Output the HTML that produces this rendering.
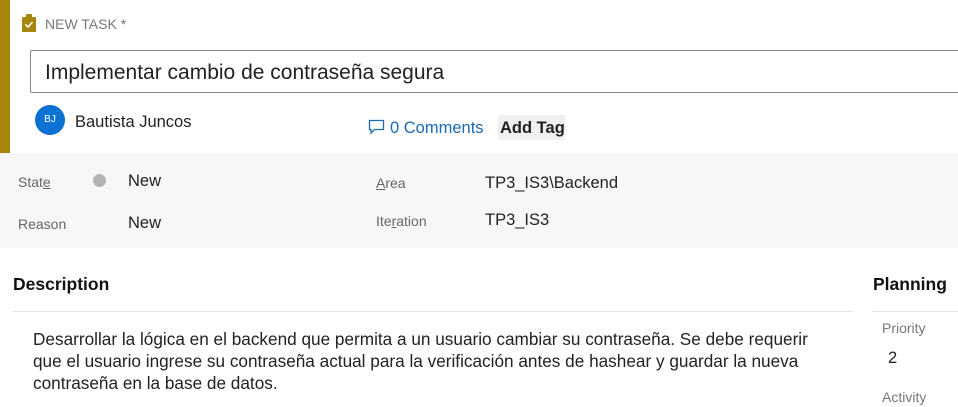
<!DOCTYPE html>
<html><head><style>
body{margin:0;width:958px;height:407px;overflow:hidden;background:#fff;font-family:"Liberation Sans",sans-serif;position:relative;color:#201f1e}
.a{position:absolute;white-space:nowrap}
.lbl{color:#666;font-size:14px}
.val{font-size:16.5px;color:#222}
</style></head><body>
<div class="a" style="left:0;top:0;width:10px;height:153px;background:#a7870b"></div>
<svg class="a" style="left:22px;top:14px" width="14" height="18" viewBox="0 0 14 18"><rect x="0" y="3" width="14" height="15" rx="1" fill="#a7870b"/><rect x="4" y="0" width="6" height="4" rx="1" fill="#a7870b"/><path d="M3.5 10.5l2.5 2.5 4.5-5" stroke="#fff" stroke-width="1.6" fill="none"/></svg>
<div class="a" style="left:45px;top:16px;font-size:14px;color:#777">NEW TASK *</div>
<div class="a" style="left:30px;top:50px;width:940px;height:43px;border:1px solid #888;border-radius:2px;box-sizing:border-box"></div>
<div class="a" style="left:45px;top:61px;font-size:21px;color:#222">Implementar cambio de contraseña segura</div>
<div class="a" style="left:35px;top:105px;width:30px;height:30px;border-radius:50%;background:#0b72d4;color:#fff;font-size:10px;text-align:center;line-height:30px">BJ</div>
<div class="a" style="left:75px;top:113px;font-size:16.5px;color:#222">Bautista Juncos</div>
<svg class="a" style="left:368px;top:119px" width="17" height="16" viewBox="0 0 17 16"><path d="M1.5 1.5h14v9h-9l-3.5 3.5v-3.5h-1.5z" stroke="#1a6ab5" stroke-width="1.3" fill="none"/></svg>
<div class="a" style="left:390px;top:119px;font-size:16.5px;color:#1a6ab5">0 Comments</div>
<div class="a" style="left:498px;top:115px;width:67px;height:25px;background:#f0f0f0;border-radius:2px"></div>
<div class="a" style="left:500px;top:119px;font-size:16.5px;font-weight:bold;color:#222">Add Tag</div>
<div class="a" style="left:0;top:153px;width:958px;height:95px;background:#f7f7f7"></div>
<div class="a lbl" style="left:18px;top:174px">Stat<u>e</u></div>
<div class="a" style="left:93px;top:174px;width:13px;height:13px;border-radius:50%;background:#b3b3b3"></div>
<div class="a val" style="left:128px;top:172px">New</div>
<div class="a lbl" style="left:18px;top:216px">Reason</div>
<div class="a val" style="left:128px;top:214px">New</div>
<div class="a lbl" style="left:376px;top:175px"><u>A</u>rea</div>
<div class="a val" style="left:485px;top:174px">TP3_IS3\Backend</div>
<div class="a lbl" style="left:376px;top:213px">Ite<u>r</u>ation</div>
<div class="a val" style="left:485px;top:211px">TP3_IS3</div>
<div class="a" style="left:13px;top:274px;font-size:17.5px;font-weight:bold;color:#111">Description</div>
<div class="a" style="left:13px;top:311px;width:840px;height:1px;background:#e3e3e3"></div>
<div class="a" style="left:873px;top:274px;font-size:17.5px;font-weight:bold;color:#111">Planning</div>
<div class="a" style="left:873px;top:311px;width:85px;height:1px;background:#e3e3e3"></div>
<div class="a" style="left:33px;top:328px;font-size:17.2px;line-height:22px;color:#222">Desarrollar la lógica en el backend que permita a un usuario cambiar su contraseña. Se debe requerir<br>que el usuario ingrese su contraseña actual para la verificación antes de hashear y guardar la nueva<br>contraseña en la base de datos.</div>
<div class="a lbl" style="left:882px;top:320px;color:#777">Priority</div>
<div class="a val" style="left:888px;top:349px">2</div>
<div class="a lbl" style="left:882px;top:389px;color:#777">Activity</div>
</body></html>
